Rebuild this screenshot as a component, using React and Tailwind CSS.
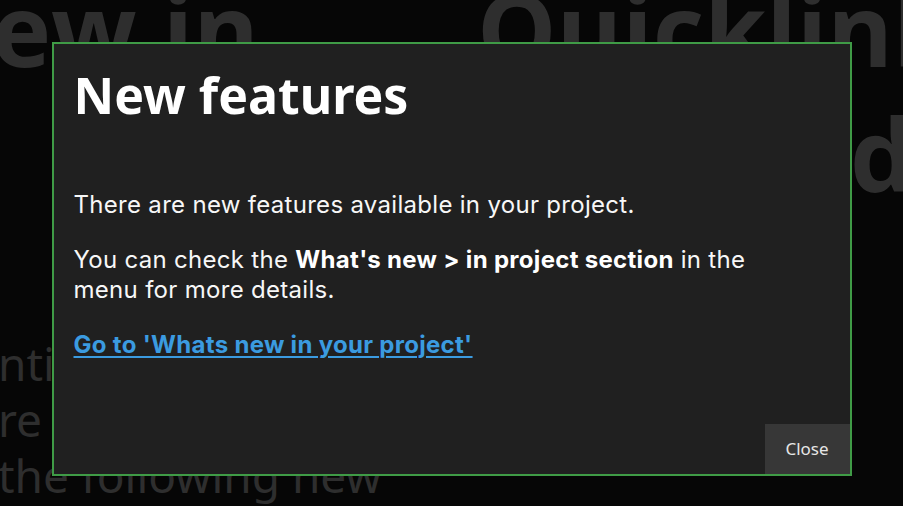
export default function App() {
    return (
        <div className="relative h-[506px] w-[903px] overflow-hidden bg-[#060606] font-['Noto_Sans',sans-serif]">
            {/* --- PAGE BEHIND THE OVERLAY --- */}
            <div className="flex flex-col text-[#2e2e2e]">
                <div className="-mt-[34px] flex items-start font-['Open_Sans',sans-serif] text-[100px] font-bold leading-[125px]">
                    <h2 className="-ml-[8px] w-[485px] shrink-0 whitespace-nowrap">ew in</h2>
                    <div className="flex flex-col whitespace-nowrap">
                        <span>Quicklinks</span>
                        <span className="ml-[373px]">d</span>
                    </div>
                </div>
                <div className="mt-[119px] -ml-[2px] flex flex-col whitespace-nowrap text-[46px] leading-[56px]">
                    <span>ntial</span>
                    <span>re to</span>
                    <span>the following new</span>
                </div>
            </div>

            {/* --- MODAL --- */}
            <div className="absolute inset-0 flex items-start justify-center pt-[42px]">
                <div className="flex h-[434px] w-[800px] flex-col border-2 border-[#3f9b46] bg-[#202020]">
                    <div className="px-5 pt-[26px]">
                        <h1 className="text-[50px] font-bold leading-none text-white">New features</h1>
                        <div className="mt-[70px] max-w-[700px] font-['Inter',sans-serif] text-[24px] leading-[30px] tracking-[0.3px] text-[#f7f7f7]">
                            <p>There are new features available in your project.</p>
                            <p className="mt-[25px]">
                                You can check the <strong className="font-bold text-white">What's new &gt; in project section</strong> in the menu for more details.
                            </p>
                            <p className="mt-[25px]">
                                <a href="#" className="font-bold text-[#3b9be0] underline decoration-2 underline-offset-[3px]">
                                    Go to 'Whats new in your project'
                                </a>
                            </p>
                        </div>
                    </div>
                    <div className="mt-auto flex justify-end">
                        <button className="h-[50px] w-[85px] bg-[#373737] text-[17px] text-[#e6e6e6]">Close</button>
                    </div>
                </div>
            </div>
        </div>
    );
}
